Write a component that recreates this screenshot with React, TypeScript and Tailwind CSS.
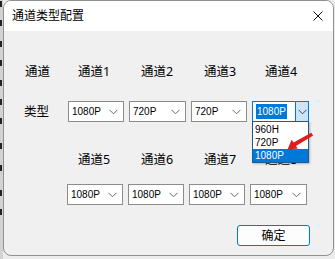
import React from "react";

function Chevron({ color = "#6b6b6b" }: { color?: string }) {
  return (
    <svg width="9" height="6" viewBox="0 0 9 6" className="shrink-0">
      <polyline points="0.5,0.8 4.5,4.8 8.5,0.8" fill="none" stroke={color} strokeWidth="1" />
    </svg>
  );
}

function Select({ value, w = "w-[56px]" }: { value: string; w?: string }) {
  return (
    <div className={`${w} h-[21px] shrink-0 bg-white border border-[#8c8c8c] flex items-center justify-between pl-[3px] pr-[5px]`}>
      <span className="text-[10px] leading-none text-black font-['Liberation_Sans',sans-serif]">{value}</span>
      <Chevron />
    </div>
  );
}

function ActiveSelect() {
  return (
    <div className="relative w-[57px] h-[21px] shrink-0 bg-white border border-[#0078d7] flex items-stretch z-10">
      <div className="flex-1 flex items-center pl-[3px]">
        <span className="bg-[#0078d7] text-white text-[10px] leading-[15px] h-[15px] px-[1px] font-['Liberation_Sans',sans-serif]">1080P</span>
      </div>
      <div className="w-[13px] bg-[#cce4f7] border-l border-[#0078d7] flex items-center justify-center">
        <Chevron color="#4a4a4a" />
      </div>
      <div className="absolute left-[-1px] top-[19px] w-[57px] h-[42px] bg-white border border-[#1e5a94] shadow-[1px_1px_2px_rgba(0,0,0,0.25)] flex flex-col font-['Liberation_Sans',sans-serif] text-[10px] text-black">
        <div className="h-[13px] leading-[13px] pl-[2px] mt-[1px]">960H</div>
        <div className="h-[13px] leading-[13px] pl-[2px]">720P</div>
        <div className="h-[13px] leading-[13px] pl-[2px] bg-[#0078d7] text-white">1080P</div>
      </div>
    </div>
  );
}

const marks = [1, 20, 41, 60, 80, 99, 118, 143, 165, 190, 209];

export default function App() {
  return (
    <div className="relative w-[335px] h-[259px] bg-[#ececec] flex overflow-hidden font-['Noto_Sans','Noto_Sans_CJK_SC',sans-serif]">
      <div className="relative w-[3px] h-[259px] bg-[#d2d2d2] shrink-0">
        {marks.map((y) => (
          <div key={y} className="absolute left-0 w-[2px] h-[6px] bg-[#222]" style={{ top: y }} />
        ))}
      </div>
      <div className="w-[331px] h-[256px] shrink-0 rounded-[8px] border border-[#909090] bg-[#f0f0f0] overflow-hidden flex flex-col text-black">
        <div className="h-[30px] bg-white flex items-center justify-between pl-[8px] pr-[10px] shrink-0">
          <span className="text-[12px] leading-none">通道类型配置</span>
          <svg width="10" height="10" viewBox="0 0 10 10">
            <line x1="0.5" y1="0.5" x2="9.5" y2="9.5" stroke="#111" strokeWidth="1" />
            <line x1="9.5" y1="0.5" x2="0.5" y2="9.5" stroke="#111" strokeWidth="1" />
          </svg>
        </div>
        <div className="flex flex-col text-[12.5px]">
          <div className="flex items-center h-[16px] mt-[33px] pl-[21px] leading-[16px]">
            <span className="w-[53px]">通道</span>
            <span className="w-[63px]">通道1</span>
            <span className="w-[63px]">通道2</span>
            <span className="w-[61px]">通道3</span>
            <span>通道4</span>
          </div>
          <div className="relative z-10 flex items-center h-[21px] mt-[21px] pl-[20px]">
            <span className="w-[44px] leading-[16px]">类型</span>
            <div className="flex gap-[5px]">
              <Select value="1080P" />
              <Select value="720P" w="w-[57px]" />
              <Select value="720P" />
              <ActiveSelect />
            </div>
          </div>
          <div className="flex items-center h-[16px] mt-[30px] pl-[74px] leading-[16px]">
            <span className="w-[63px]">通道5</span>
            <span className="w-[63px]">通道6</span>
            <span className="w-[61px]">通道7</span>
            <span>通道8</span>
          </div>
          <div className="flex gap-[5px] h-[21px] mt-[16px] pl-[63px]">
            <Select value="1080P" />
            <Select value="1080P" />
            <Select value="1080P" />
            <Select value="1080P" w="w-[57px]" />
          </div>
          <div className="mt-[20px] pl-[233px]">
            <button className="w-[73px] h-[21px] rounded-[3px] border border-[#0078d7] bg-[#fdfdfd] text-[12px] leading-none flex items-center justify-center">
              确定
            </button>
          </div>
        </div>
      </div>
      <svg className="absolute left-[280px] top-[128px] z-20" width="40" height="28" viewBox="0 0 40 28">
        <polygon points="7.5,21.5 11.6,11.8 13.6,14.6 31.2,4.8 33.2,7.4 16,17.9 17.8,20.6" fill="#e21b1b" />
      </svg>
    </div>
  );
}
